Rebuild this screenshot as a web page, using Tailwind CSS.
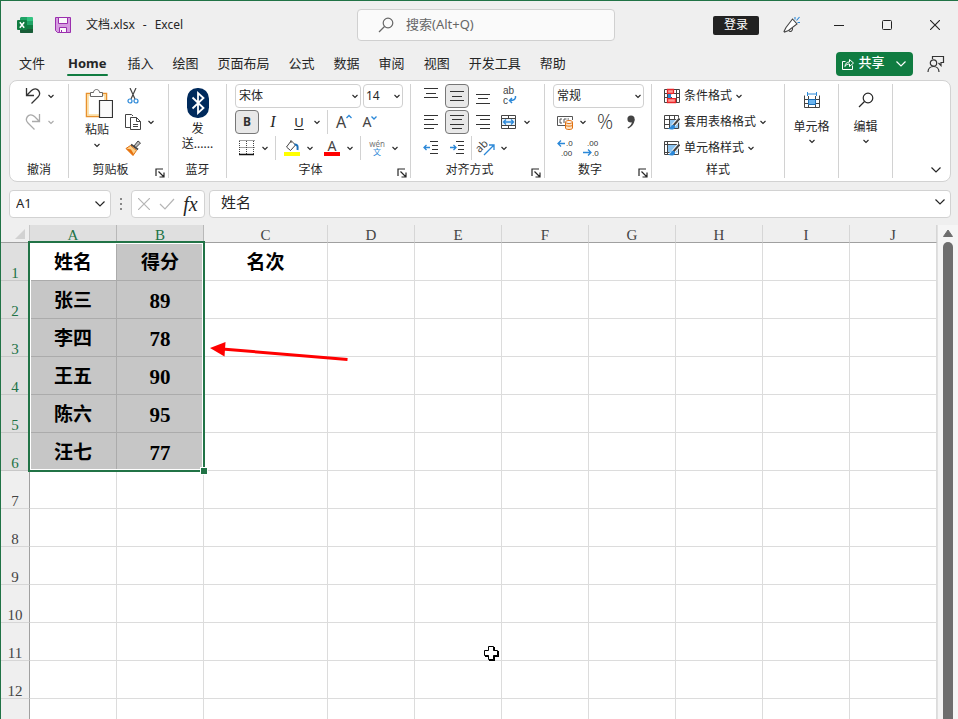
<!DOCTYPE html>
<html lang="zh-CN">
<head>
    <meta charset="UTF-8">
    <meta name="viewport" content="width=device-width, initial-scale=1.0">
    <title>文档.xlsx - Excel</title>
    <script src="https://cdn.jsdelivr.net/npm/@tailwindcss/browser@4"></script>
</head>
<body class="h-screen overflow-hidden flex flex-col bg-[#efefef] border-t border-l border-[#217346] font-['Noto_Sans','Noto_Sans_CJK_SC',sans-serif] text-xs text-[#262626]">
    <!-- Shared icons -->
    <svg class="hidden">
        <symbol id="chev" viewBox="0 0 12 12"><path d="M3.500 5l2.500 2.500L8.500 5" fill="none" stroke="currentColor" stroke-width="1.100"/></symbol>
        <symbol id="chevBig" viewBox="0 0 12 12"><path d="M1.500 3.500L6 8l4.500-4.500" fill="none" stroke="currentColor" stroke-width="1.200"/></symbol>
        <symbol id="launch" viewBox="0 0 10 10"><path d="M1 8V1h7M3.500 3.500l5 5M9 4.500V9H4.500" fill="none" stroke="currentColor" stroke-width="1.200"/></symbol>
        <symbol id="magnifier" viewBox="0 0 16 16"><path d="M6.500 9.500L1 15" fill="none" stroke="currentColor" stroke-width="1.300"/><circle cx="10" cy="6" r="4.800" fill="none" stroke="currentColor" stroke-width="1.200"/></symbol>
    </svg>

    <!-- Title bar -->
    <header class="h-12 shrink-0 flex items-center">
        <div class="flex-1 flex items-center pl-4">
            <svg class="size-4" viewBox="0 0 16 16">
                <path d="M4 0h6v8H3V1z" fill="#21a366"/><path d="M10 0h5.500l.5.5V4h-6z" fill="#33c481"/>
                <path d="M10 4h6v4h-6z" fill="#21a366"/><path d="M3 8h7v4H3z" fill="#107c41"/><path d="M10 8h6v4h-6z" fill="#107c41"/>
                <path d="M3 12h13v3.500l-.5.5h-12L3 15.500z" fill="#185c37"/>
                <rect y="3" width="10" height="10" rx="1" fill="#107c41"/>
                <path d="M2.800 5.200l4.400 5.600M7.200 5.200l-4.400 5.600" stroke="#fff" stroke-width="1.500"/>
            </svg>
            <button class="ml-5.5" aria-label="保存">
                <svg class="size-4" viewBox="0 0 16 16">
                    <path d="M.5.5h15v15H2.500l-2-2z" fill="#d59be0" stroke="#9b2fae"/>
                    <path d="M3.500.5h9v6h-9zM4.500 10.500h7v5h-7z" fill="#fafafa" stroke="#9b2fae"/>
                    <path d="M6.500 13v2.500" stroke="#9b2fae"/>
                </svg>
            </button>
            <h1 class="ml-[15px] flex gap-2"><span>文档.xlsx</span><span>-</span><span>Excel</span></h1>
        </div>
        <label class="ml-2 w-[258px] h-8 flex items-center bg-[#fafafa] border border-[#d0d0d0] rounded pl-5">
            <svg class="size-4 text-[#666]"><use href="#magnifier"/></svg>
            <input type="text" aria-label="搜索" placeholder="搜索(Alt+Q)" class="ml-3 min-w-0 flex-1 text-[13px] placeholder:text-[#666] outline-none">
        </label>
        <div class="flex-1 flex items-center justify-end pr-[11px]">
            <button class="h-[19px] w-[46px] mr-5 bg-[#222] text-white text-xs rounded-xs flex items-center justify-center">登录</button>
            <button class="w-6 flex justify-center" aria-label="新增功能">
                <svg class="size-5" viewBox="0 0 20 20" fill="none" stroke="#444" stroke-width="1.100">
                    <path d="M11.500 4l4.500 5-8.500 6.500-4 1.500-.5-.5 2-4z" fill="#fff"/><path d="M8 15.500c1 2 4 1 3.500-2.500"/>
                    <path d="M14 4.500V2M15.500 5.500l3-3.500M16.500 7.500H19" stroke="#2b88d8"/>
                </svg>
            </button>
            <button class="ml-6 w-6 flex justify-center" aria-label="最小化"><svg class="w-2.5 h-2.5"><path d="M0 5.500h10" stroke="#222"/></svg></button>
            <button class="ml-6 w-6 flex justify-center" aria-label="最大化"><svg class="w-2.5 h-2.5"><rect x=".5" y=".5" width="9" height="9" rx="1" fill="none" stroke="#222"/></svg></button>
            <button class="ml-6 w-6 flex justify-center" aria-label="关闭"><svg class="w-2.5 h-2.5"><path d="M0 0l10 10M10 0L0 10" stroke="#222" stroke-width="1.100"/></svg></button>
        </div>
    </header>

    <!-- Ribbon tabs -->
    <nav class="h-[31px] shrink-0 flex items-center pl-[18px] pr-[13px] pb-0.5 text-[13px]">
        <div class="flex gap-[19px] whitespace-nowrap">
            <a href="#">文件</a>
            <a href="#" class="relative ml-1 mr-0.5 font-bold">Home<span class="absolute -inset-x-px -bottom-1 h-0.5 rounded-full bg-[#107c41]"></span></a>
            <a href="#">插入</a>
            <a href="#">绘图</a>
            <a href="#">页面布局</a>
            <a href="#">公式</a>
            <a href="#">数据</a>
            <a href="#">审阅</a>
            <a href="#">视图</a>
            <a href="#">开发工具</a>
            <a href="#">帮助</a>
        </div>
        <button class="ml-auto w-[77px] h-6 flex items-center justify-center bg-[#107c41] text-white font-medium rounded">
            <svg class="w-3 h-3" viewBox="0 0 12 12" fill="none" stroke="#fff" stroke-width="1"><path d="M3.500 3.500h-3v8h10v-4"/><path d="M3 8.500c0-3 2-4.500 4.500-4.500V1.500l4 3.500-4 3.500V6C5.500 6 4 6.500 3 8.500z"/></svg>
            <span class="ml-1 pb-0.5">共享</span>
            <svg class="ml-2.5 w-3 h-3"><use href="#chevBig"/></svg>
        </button>
        <button class="ml-3.5" aria-label="批注">
            <svg class="w-[18px] h-[18px]" viewBox="0 0 18 18" fill="none" stroke="#333" stroke-width="1.200"><path d="M5.500 4V1.500h11v6H14v3l-2.500-2.500"/><circle cx="6.500" cy="8" r="3.200"/><path d="M1 17c0-3.500 2.500-5.500 5.500-5.500s5.500 2 5.500 5.500"/></svg>
        </button>
    </nav>

    <!-- Ribbon -->
    <section class="ml-2 mr-[7px] shrink-0 flex py-[3px] bg-white border border-[#d2d2d2] rounded-lg whitespace-nowrap">
        <!-- Undo -->
        <div class="w-[59px] flex flex-col border-r border-[#d2d2d2]">
            <div class="h-[76px] flex flex-col gap-0.5 pl-[11px]">
                <button class="h-6 flex items-center" aria-label="撤消">
                    <svg class="w-6 h-6" viewBox="0 0 24 24" fill="none" stroke="#333" stroke-width="1.300"><path d="M5.500 4v7.500H13M5.500 11.500l5-5c2.500-2.500 5.500-2 7 0s1.500 4.500-.5 6.500l-6.500 6.500"/></svg>
                    <svg class="w-3 h-3"><use href="#chev"/></svg>
                </button>
                <button class="h-6 flex items-center text-[#aaa]" aria-label="恢复" disabled>
                    <svg class="w-6 h-6" viewBox="0 0 24 24" fill="none" stroke="#aaa" stroke-width="1.300"><path d="M18.500 4v7.500H11M18.500 11.500l-5-5c-2.500-2.500-5.500-2-7 0s-1.500 4.500.5 6.500l6.500 6.500"/></svg>
                    <svg class="w-3 h-3"><use href="#chev"/></svg>
                </button>
            </div>
            <div class="h-4 mt-0.5 text-center">撤消</div>
        </div>
        <!-- Clipboard -->
        <div class="w-[100px] flex flex-col border-r border-[#d2d2d2]">
            <div class="h-[76px] flex gap-1 pl-2">
                <button class="w-10 flex flex-col items-center pt-1">
                    <svg class="w-7 h-8 ml-1 shrink-0" viewBox="0 0 28 32">
                        <path d="M1.500 5.500h20v23h-20z" fill="#fff" stroke="#e8912d" stroke-width="1.500"/><path d="M3 7h17v20H3z" fill="none" stroke="#fbdc9a" stroke-width="1.500"/>
                        <path d="M5.500 8.500v-4h3c0-4 6-4 6 0h3v4z" fill="#fff" stroke="#666"/>
                        <path d="M14.500 12.500h13v17h-13z" fill="#fafafa" stroke="#333" stroke-width="1.200"/>
                    </svg>
                    <span class="leading-4 mt-0.5">粘贴</span>
                    <svg class="w-3 h-3 mt-px"><use href="#chev"/></svg>
                </button>
                <div class="flex flex-col gap-0.5">
                    <button class="h-6 w-6 flex items-center justify-center" aria-label="剪切">
                        <svg class="w-3 h-4" viewBox="0 0 12 16" fill="none" stroke="#444" stroke-width="1.200"><path d="M3 0l5 11M9 0L4 11"/><circle cx="3" cy="13" r="2" stroke="#2b88d8"/><circle cx="9" cy="13" r="2" stroke="#2b88d8"/></svg>
                    </button>
                    <button class="h-6 flex items-center" aria-label="复制">
                        <span class="w-6 flex justify-center"><svg class="w-4 h-4" viewBox="0 0 16 16" fill="#fff" stroke="#444"><path d="M5 13.500H.5V.5h6L8 2"/><path d="M5.500 3.500h6l4 4v8h-10z"/><path d="M11.500 3.500v4h4M8 10.500h5M8 12.500h5" fill="none"/></svg></span>
                        <svg class="w-3 h-3"><use href="#chev"/></svg>
                    </button>
                    <button class="h-6 w-6 flex items-center justify-center" aria-label="格式刷">
                        <svg class="w-4 h-4" viewBox="0 0 16 16"><path d="M9 6l4-5 2.500 2L11 7.500" fill="#bbb" stroke="#444"/><path d="M6 4.500l7 5" stroke="#444" stroke-width="2"/><path d="M5.500 5.500l6 5L8 15.500 1 8.500z" fill="#fbd08a" stroke="#e07010"/><path d="M1 8.500l5 1 3 5-1 1z" fill="#e8710d"/></svg>
                    </button>
                </div>
            </div>
            <div class="h-4 mt-0.5 flex"><span class="flex-1 text-center">剪贴板</span><button class="w-4 flex justify-center items-end" aria-label="剪贴板选项"><svg class="w-2.5 h-2.5"><use href="#launch"/></svg></button></div>
        </div>
        <!-- Bluetooth -->
        <div class="w-[58px] flex flex-col border-r border-[#d2d2d2]">
            <button class="h-[76px] flex flex-col items-center pt-1">
                <svg class="w-[22px] h-[30px] shrink-0" viewBox="0 0 22 30"><rect width="22" height="30" rx="10.500" fill="#002a5c"/><path d="M5.500 9.500l11 10.500-5.500 5V5l5.500 5-11 10.500" fill="none" stroke="#fff" stroke-width="1.800"/></svg>
                <span class="mt-[3px] leading-[15px]">发<br>送......</span>
            </button>
            <div class="h-4 mt-0.5 text-center">蓝牙</div>
        </div>
        <!-- Font -->
        <div class="w-[184px] flex flex-col border-r border-[#d2d2d2]">
            <div class="h-[76px] flex flex-col gap-0.5 pl-2">
                <div class="flex gap-0.5">
                    <div class="relative w-[126px]">
                        <select aria-label="字体" class="w-full h-6 pl-[3px] appearance-none border border-[#d0d0d0] rounded"><option>宋体</option></select>
                        <svg class="absolute right-0 top-1.5 w-3 h-3 pointer-events-none"><use href="#chev"/></svg>
                    </div>
                    <div class="relative w-10">
                        <select aria-label="字号" class="w-full h-6 pl-0.5 text-xs appearance-none border border-[#d0d0d0] rounded"><option>14</option></select>
                        <svg class="absolute right-0 top-1.5 w-3 h-3 pointer-events-none"><use href="#chev"/></svg>
                    </div>
                </div>
                <div class="h-6 flex items-center">
                    <button class="w-6 h-6 mr-0.5 bg-[#e8e8e8] border border-[#777] rounded font-bold text-xs leading-none text-[#333]">B</button>
                    <button class="w-6 mr-0.5 font-['Liberation_Serif',serif] italic text-base leading-none">I</button>
                    <button class="w-6 text-[13px] leading-none underline underline-offset-2">U</button>
                    <svg class="w-3 h-3"><use href="#chev"/></svg>
                    <span class="mx-1 w-px h-6 bg-[#d2d2d2]"></span>
                    <button class="w-6 mr-0.5 flex justify-center text-base leading-none text-[#444]">A<svg class="w-1.5 h-1.5" viewBox="0 0 6 6"><path d="M.5 4L3 1.500 5.500 4" fill="none" stroke="#2b88d8" stroke-width="1.300"/></svg></button>
                    <button class="w-6 flex justify-center text-sm leading-none text-[#444]">A<svg class="w-1.5 h-1.5" viewBox="0 0 6 6"><path d="M.5 1.500L3 4l2.500-2.500" fill="none" stroke="#2b88d8" stroke-width="1.300"/></svg></button>
                </div>
                <div class="h-6 flex items-center">
                    <button class="w-6 flex justify-center" aria-label="边框"><svg class="w-4 h-4" viewBox="0 0 16 16" fill="none" stroke="#444"><path d="M.5.5h15M.5 7.500h15M.5 1v13M7.500 1v13M14.500 1v13" stroke-dasharray="1 1"/><path d="M0 14.500h15" stroke="#111" stroke-width="1.500"/></svg></button>
                    <svg class="w-3 h-3"><use href="#chev"/></svg>
                    <span class="mx-1 w-px h-6 bg-[#d2d2d2]"></span>
                    <button class="w-6 flex justify-center" aria-label="填充颜色"><svg class="w-4 h-4" viewBox="0 0 16 16"><path d="M7 1L2.500 7l4 3.500L11.500 5 7 .5V3" fill="#fff" stroke="#444"/><path d="M10.500 4.500c3-.5 3.500 2 3 5.500" fill="none" stroke="#1a6fb8" stroke-width="2"/><path d="M0 12h16v4H0z" fill="#ff0"/></svg></button>
                    <svg class="w-3 h-3"><use href="#chev"/></svg>
                    <button class="ml-1 w-6 flex flex-col items-center text-sm leading-3 text-[#444]" aria-label="字体颜色">A<span class="w-4 h-1 bg-[#f00]"></span></button>
                    <svg class="w-3 h-3"><use href="#chev"/></svg>
                    <span class="mx-1 w-px h-6 bg-[#d2d2d2]"></span>
                    <button class="w-6 flex flex-col items-center text-[8px] leading-2 text-[#777]">wén<span class="text-[#2b88d8]">文</span></button>
                    <svg class="w-3 h-3"><use href="#chev"/></svg>
                </div>
            </div>
            <div class="h-4 mt-0.5 flex"><span class="flex-1 text-center">字体</span><button class="w-4 flex justify-center items-end" aria-label="字体选项"><svg class="w-2.5 h-2.5"><use href="#launch"/></svg></button></div>
        </div>
        <!-- Alignment -->
        <div class="w-[134px] flex flex-col border-r border-[#d2d2d2]">
            <div class="h-[76px] flex flex-col gap-0.5 pl-2">
                <div class="h-6 flex items-center gap-0.5">
                    <button class="w-6 flex justify-center" aria-label="顶端对齐"><svg class="w-4 h-4" viewBox="0 0 16 16" stroke="#333"><path d="M1 .5h14M3 5.500h10M1 9.500h14"/></svg></button>
                    <button class="w-6 h-6 flex items-center justify-center bg-[#e8e8e8] border border-[#777] rounded" aria-label="垂直居中"><svg class="w-4 h-4" viewBox="0 0 16 16" stroke="#333"><path d="M1 3.500h14M3 8.500h10M1 12.500h14"/></svg></button>
                    <button class="w-6 flex justify-center" aria-label="底端对齐"><svg class="w-4 h-4" viewBox="0 0 16 16" stroke="#333"><path d="M1 6.500h14M3 10.500h10M1 15.500h14"/></svg></button>
                    <button class="w-6 flex justify-center" aria-label="自动换行"><svg class="w-4 h-4 overflow-visible font-['Liberation_Sans',sans-serif]" viewBox="0 0 16 16"><text x="2" y="6" font-size="10" fill="#444">ab</text><text x="2" y="16" font-size="10" fill="#444">c</text><path d="M14.500 8c.5 3-1 4.500-6 4.500M11 10l-2.500 2.500L11 15" fill="none" stroke="#2b88d8" stroke-width="1.500"/></svg></button>
                </div>
                <div class="h-6 flex items-center gap-0.5">
                    <button class="w-6 flex justify-center" aria-label="左对齐"><svg class="w-4 h-4" viewBox="0 0 16 16" stroke="#333"><path d="M1 1.500h14M1 5.500h10M1 10.500h14M1 14.500h10"/></svg></button>
                    <button class="w-6 h-6 flex items-center justify-center bg-[#e8e8e8] border border-[#777] rounded" aria-label="居中"><svg class="w-4 h-4" viewBox="0 0 16 16" stroke="#333"><path d="M1 1.500h14M3 5.500h10M1 10.500h14M3 14.500h10"/></svg></button>
                    <button class="w-6 flex justify-center" aria-label="右对齐"><svg class="w-4 h-4" viewBox="0 0 16 16" stroke="#333"><path d="M1 1.500h14M5 5.500h10M1 10.500h14M5 14.500h10"/></svg></button>
                    <button class="flex items-center" aria-label="合并后居中">
                        <span class="w-6 flex justify-center"><svg class="w-4 h-4" viewBox="0 0 16 16" fill="none" stroke="#444"><path d="M.5 1.500h14v13H.5zM7.500 1.500v3M7.500 11.500v3"/><path d="M.5 4.500h14v7H.5z" fill="#e5f1fb"/><path d="M3 8h9M5 5.500L2.500 8 5 10.500M10 5.500L12.500 8 10 10.500" stroke="#2b88d8" stroke-width="1.300"/></svg></span>
                        <svg class="w-3 h-3"><use href="#chev"/></svg>
                    </button>
                </div>
                <div class="h-6 flex items-center gap-0.5">
                    <button class="w-6 flex justify-center" aria-label="减少缩进量"><svg class="w-4 h-4" viewBox="0 0 16 16" stroke="#333" fill="none"><path d="M7 1.500h8M9 5.500h6M9 9.500h6M7 13.500h8"/><path d="M7 7.500H1M3.500 5L1 7.500 3.500 10" stroke="#2b88d8" stroke-width="1.300"/></svg></button>
                    <button class="w-6 flex justify-center" aria-label="增加缩进量"><svg class="w-4 h-4" viewBox="0 0 16 16" stroke="#333" fill="none"><path d="M7 1.500h8M9 5.500h6M9 9.500h6M7 13.500h8"/><path d="M1 7.500h6M4.500 5L7 7.500 4.500 10" stroke="#2b88d8" stroke-width="1.300"/></svg></button>
                    <span class="w-px h-6 bg-[#d2d2d2]"></span>
                    <button class="flex items-center" aria-label="方向">
                        <span class="w-6 flex justify-center"><svg class="w-4 h-4 overflow-visible" viewBox="0 0 16 16"><text x="-1" y="11" font-size="11" fill="#444" transform="rotate(-45 3 9)">ab</text><path d="M6 15L15.500 5.500M11 5h5v5" fill="none" stroke="#2b88d8" stroke-width="1.300"/></svg></span>
                        <svg class="w-3 h-3"><use href="#chev"/></svg>
                    </button>
                </div>
            </div>
            <div class="h-4 mt-0.5 flex"><span class="flex-1 text-center">对齐方式</span><button class="w-4 flex justify-center items-end" aria-label="对齐选项"><svg class="w-2.5 h-2.5"><use href="#launch"/></svg></button></div>
        </div>
        <!-- Number -->
        <div class="w-[107px] flex flex-col border-r border-[#d2d2d2]">
            <div class="h-[76px] flex flex-col gap-0.5 pl-2">
                <div class="relative w-[91px]">
                    <select aria-label="数字格式" class="w-full h-6 pl-[3px] appearance-none border border-[#d0d0d0] rounded"><option>常规</option></select>
                    <svg class="absolute right-0 top-1.5 w-3 h-3 pointer-events-none"><use href="#chev"/></svg>
                </div>
                <div class="h-6 flex items-center">
                    <button class="w-6 flex justify-center" aria-label="会计数字格式"><svg class="w-4 h-4" viewBox="0 0 16 16" fill="none" stroke="#555"><path d="M8 11.500H.5v-9h15V6"/><path d="M5 5H3v4h2M7 9V5h2.500M12 5h-1.500"/><path d="M8.500 8v6c0 2 7 2 7 0V8" fill="#fde3c4" stroke="#e07010"/><path d="M8.500 11c0 1.500 7 1.500 7 0" stroke="#e07010"/><ellipse cx="12" cy="8" rx="3.500" ry="1.500" fill="#fff" stroke="#e07010"/></svg></button>
                    <svg class="w-3 h-3"><use href="#chev"/></svg>
                    <button class="ml-1 w-6 mr-0.5 font-['Open_Sans',sans-serif] font-light text-xl leading-none text-[#333]">%</button>
                    <button class="w-6 flex justify-center" aria-label="千位分隔样式"><svg class="w-2 h-3.5" viewBox="0 0 8 14"><circle cx="4" cy="4" r="3.600" fill="#444"/><path d="M7.600 4c0 4-2 7.500-6.500 9.500l-.6-1C3.500 11 5 9 5 6z" fill="#444"/></svg></button>
                </div>
                <div class="h-6 flex items-center gap-0.5">
                    <button class="w-6 flex justify-center" aria-label="增加小数位数"><svg class="w-4 h-4 overflow-visible font-['Liberation_Sans',sans-serif]" viewBox="0 0 16 16"><text x="9" y="6" font-size="8" fill="#333">.0</text><text x="4" y="16" font-size="8" fill="#333">.00</text><path d="M8 3.500H1M4 .5l-3 3 3 3" fill="none" stroke="#2b88d8" stroke-width="1.300"/></svg></button>
                    <button class="w-6 flex justify-center" aria-label="减少小数位数"><svg class="w-4 h-4 overflow-visible font-['Liberation_Sans',sans-serif]" viewBox="0 0 16 16"><text x="4" y="6" font-size="8" fill="#333">.00</text><text x="9" y="16" font-size="8" fill="#333">.0</text><path d="M0 12.500h8M5 9.500l3 3-3 3" fill="none" stroke="#2b88d8" stroke-width="1.300"/></svg></button>
                </div>
            </div>
            <div class="h-4 mt-0.5 flex"><span class="flex-1 text-center">数字</span><button class="w-4 flex justify-center items-end" aria-label="数字选项"><svg class="w-2.5 h-2.5"><use href="#launch"/></svg></button></div>
        </div>
        <!-- Styles -->
        <div class="w-[133px] flex flex-col border-r border-[#d2d2d2]">
            <div class="h-[76px] flex flex-col gap-0.5 pl-3">
                <button class="h-6 flex items-center">
                    <svg class="w-4 h-4 mr-1" viewBox="0 0 16 16" fill="none" stroke="#444"><path d="M.5 1.500h15v13H.5zM.5 5.500h15M.5 9.500h15M3.500 1.500v13M12.500 1.500v13"/><path d="M3.500 1.500h6v4h-6zM3.500 10.500h8v4h-8z" fill="#ff9a94" stroke="#e8262a" stroke-width="1.300"/><path d="M4 6h3v4H4z" fill="#2b88d8" stroke="none"/><path d="M8 6h4v4H8z" fill="#fff" stroke="none"/></svg>
                    条件格式<svg class="ml-px w-3 h-3"><use href="#chev"/></svg>
                </button>
                <button class="h-6 flex items-center">
                    <svg class="w-4 h-4 mr-1" viewBox="0 0 16 16" fill="none" stroke="#444"><path d="M5.500 5.500h10v9h-10z" fill="#8cc4f0" stroke="none"/><path d="M.5 1.500h14v13H.5zM.5 5.500h14M.5 10.500h5M5.500 1.500v13M10.500 1.500v4"/><path d="M15.500 4.500L9 12" stroke="#fff" stroke-width="4"/><path d="M15.500 4.500L9 12" stroke="#444" stroke-width="2"/><path d="M9.500 10.500c-2 0-2 3-5.500 4 3 2 7.500 1 7-2z" fill="#2b88d8" stroke="none"/></svg>
                    套用表格格式<svg class="ml-px w-3 h-3"><use href="#chev"/></svg>
                </button>
                <button class="h-6 flex items-center">
                    <svg class="w-4 h-4 mr-1" viewBox="0 0 16 16" fill="none" stroke="#444"><path d="M3.500 4.500h10v8h-10z" fill="#8cc4f0" stroke="none"/><path d="M.5 1.500h14v13H.5zM.5 4.500h14M3.500 1.500v13M.5 12.500h5"/><path d="M15.500 4.500L9 12" stroke="#fff" stroke-width="4"/><path d="M15.500 4.500L9 12" stroke="#444" stroke-width="2"/><path d="M9.500 10.500c-2 0-2 3-5.500 4 3 2 7.500 1 7-2z" fill="#2b88d8" stroke="none"/></svg>
                    单元格样式<svg class="ml-px w-3 h-3"><use href="#chev"/></svg>
                </button>
            </div>
            <div class="h-4 mt-0.5 text-center">样式</div>
        </div>
        <!-- Cells and editing -->
        <button class="w-[54px] flex flex-col items-center pt-2 border-r border-[#d2d2d2]">
            <svg class="w-4 h-4" viewBox="0 0 16 16" fill="none" stroke="#444"><path d="M.5 3.500v12h15v-12M.5 7.500h15M.5 11.500h15M4.500 4v11.500M11.500 4v11.500"/><path d="M4.500 7.500h7v5h-7z" fill="#6cb4ee" stroke="#1a6fb8"/><path d="M3.500 0v4M12.500 0v4M3.500 2h9" stroke="#2b88d8"/></svg>
            <span class="mt-[11px] leading-4">单元格</span>
            <svg class="w-3 h-3"><use href="#chev"/></svg>
        </button>
        <button class="w-[54px] flex flex-col items-center pt-2 border-r border-[#d2d2d2]">
            <svg class="w-4 h-4"><use href="#magnifier"/></svg>
            <span class="mt-[11px] leading-4">编辑</span>
            <svg class="w-3 h-3"><use href="#chev"/></svg>
        </button>
        <button class="ml-auto mr-2 self-end mb-0.5" aria-label="折叠功能区"><svg class="w-3 h-3"><use href="#chevBig"/></svg></button>
    </section>

    <!-- Formula bar -->
    <section class="ml-2 mr-[7px] mt-2 mb-[7px] h-7 shrink-0 flex">
        <label class="w-[102px] flex items-center bg-white border border-[#d2d2d2] rounded px-1">
            <input type="text" aria-label="名称框" value="A1" class="min-w-0 flex-1 pl-0.5 text-[13px] outline-none">
            <svg class="w-3 h-3"><use href="#chevBig"/></svg>
        </label>
        <svg class="w-5 h-7" viewBox="0 0 20 28" fill="#888"><path d="M9 8h2v2H9zM9 13h2v2H9zM9 18h2v2H9z"/></svg>
        <div class="w-[74px] flex items-center justify-around px-0.5 bg-white border border-[#d2d2d2] rounded">
            <button aria-label="取消"><svg class="w-3 h-3"><path d="M0 0l12 12M12 0L0 12" stroke="#b5b5b5" stroke-width="1.200"/></svg></button>
            <button aria-label="输入"><svg class="w-4 h-3"><path d="M1 6l5 5L15 1" fill="none" stroke="#b5b5b5" stroke-width="1.200"/></svg></button>
            <button class="font-['Liberation_Serif',serif] italic text-xl leading-none">fx</button>
        </div>
        <label class="ml-1 flex-1 flex items-center bg-white border border-[#d2d2d2] rounded pl-[11px] pr-1 pb-1">
            <input type="text" aria-label="编辑栏" value="姓名" class="min-w-0 flex-1 text-[15px] leading-5 outline-none">
            <svg class="w-3 h-3"><use href="#chevBig"/></svg>
        </label>
    </section>

    <!-- Worksheet -->
    <main class="relative flex-1 min-h-0 flex overflow-hidden">
        <div class="flex-1 min-w-0">
            <table class="w-full table-fixed border-separate border-spacing-0 font-['Liberation_Serif','Noto_Sans_CJK_SC',serif]">
                <colgroup>
                    <col class="w-[29px]"><col class="w-[87px]"><col class="w-[87px]"><col class="w-[124px]">
                    <col class="w-[87px]"><col class="w-[87px]"><col class="w-[87px]"><col class="w-[87px]"><col class="w-[87px]"><col class="w-[87px]"><col>
                </colgroup>
                <thead><tr id="colHeads"></tr></thead>
                <tbody id="sheetBody"></tbody>
            </table>
        </div>
        <div class="w-[21px] flex flex-col items-center bg-[#f5f5f5] border-l border-[#e0e0e0]">
            <svg class="w-2.5 h-[17px] shrink-0" viewBox="0 0 10 17"><path d="M5 5l4.500 6.500h-9z" fill="#6e6e6e" stroke="#6e6e6e" stroke-linejoin="round"/></svg>
            <div class="w-2.5 flex-1 rounded-t-full bg-[#6e6e6e]"></div>
        </div>

        <!-- Selection frame with its fill handle -->
        <div class="absolute left-[27px] top-4 w-[177px] h-[231px] border-2 border-[#217346] pointer-events-none">
            <div class="h-full border border-white"></div>
            <span class="absolute -right-1 -bottom-1 size-1.5 bg-[#217346] outline outline-white"></span>
        </div>
        <!-- Arrow and cell cursor -->
        <svg class="absolute left-[209px] top-[116px] w-[138px] h-5 pointer-events-none" viewBox="0 0 138 20"><path d="M12 8l125.500 10.500" stroke="#f00" stroke-width="3"/><path d="M0 7l15.500-6-1 14.500z" fill="#f00"/></svg>
        <svg class="absolute left-[482px] top-[420px] w-4 h-4 pointer-events-none" viewBox="0 0 16 16"><path d="M6 2h6v4h4v6h-4v4H6v-4H2V6h4z" fill="#000"/><path d="M5.500 1.500h5v4h4v5h-4v4h-5v-4h-4v-5h4z" fill="#fff" stroke="#000"/></svg>
    </main>

    <script>
        const columns = ['A', 'B', 'C', 'D', 'E', 'F', 'G', 'H', 'I', 'J'];
        const data = [
            ['姓名', '得分', '名次'],
            ['张三', '89'],
            ['李四', '78'],
            ['王五', '90'],
            ['陈六', '95'],
            ['汪七', '77']
        ];
        const rowCount = 13;

        // Column headings, with the select-all corner first
        document.getElementById('colHeads').innerHTML =
            `<th class="h-[18px] p-0 border-b border-r border-b-[#a0a0a0] border-r-[#c8c8c8]"><svg class="ml-auto mr-1 w-2.5 h-2.5"><path d="M10 0v10H0z" fill="#d2d2d2"/></svg></th>` +
            columns.map((name, c) => {
                const color = c < 2 ? 'bg-[#dfdfdf] text-[#217346] border-r-[#b8b8b8]' : 'text-[#444] border-r-[#d6d6d6]';
                return `<th scope="col" class="h-[18px] p-0 pt-1 border-b border-r border-b-[#a0a0a0] text-[15px] leading-[13px] font-normal ${color}">${name}</th>`;
            }).join('');

        // Rows
        let html = '';
        for (let r = 0; r < rowCount; r++) {
            const head = r < 6 ? 'bg-[#dfdfdf] text-[#217346] border-b-[#c8c8c8]' : 'text-[#444] border-b-[#d6d6d6]';
            html += `<tr><th scope="row" class="h-[38px] p-0 border-b border-r border-r-[#a0a0a0] align-bottom text-[15px] leading-[14px] font-normal ${head}">${r < 12 ? r + 1 : ''}</th>`;
            columns.forEach((name, c) => {
                const selected = r < 6 && c < 2;
                let style = 'bg-white border-[#dcdcdc]';
                if (selected) style = r === 0 && c === 0 ? 'bg-white border-[#ababab]' : 'bg-[#c6c6c6] border-[#ababab]';
                const size = r > 0 && c === 1 ? 'text-[21px]' : 'text-[19px]';
                html += `<td class="h-[38px] p-0 pt-0.5 border-b border-r text-center leading-6 font-bold text-black ${size} ${style}">${(data[r] && data[r][c]) || ''}</td>`;
            });
            html += '</tr>';
        }
        document.getElementById('sheetBody').innerHTML = html;
    </script>
</body>
</html>
